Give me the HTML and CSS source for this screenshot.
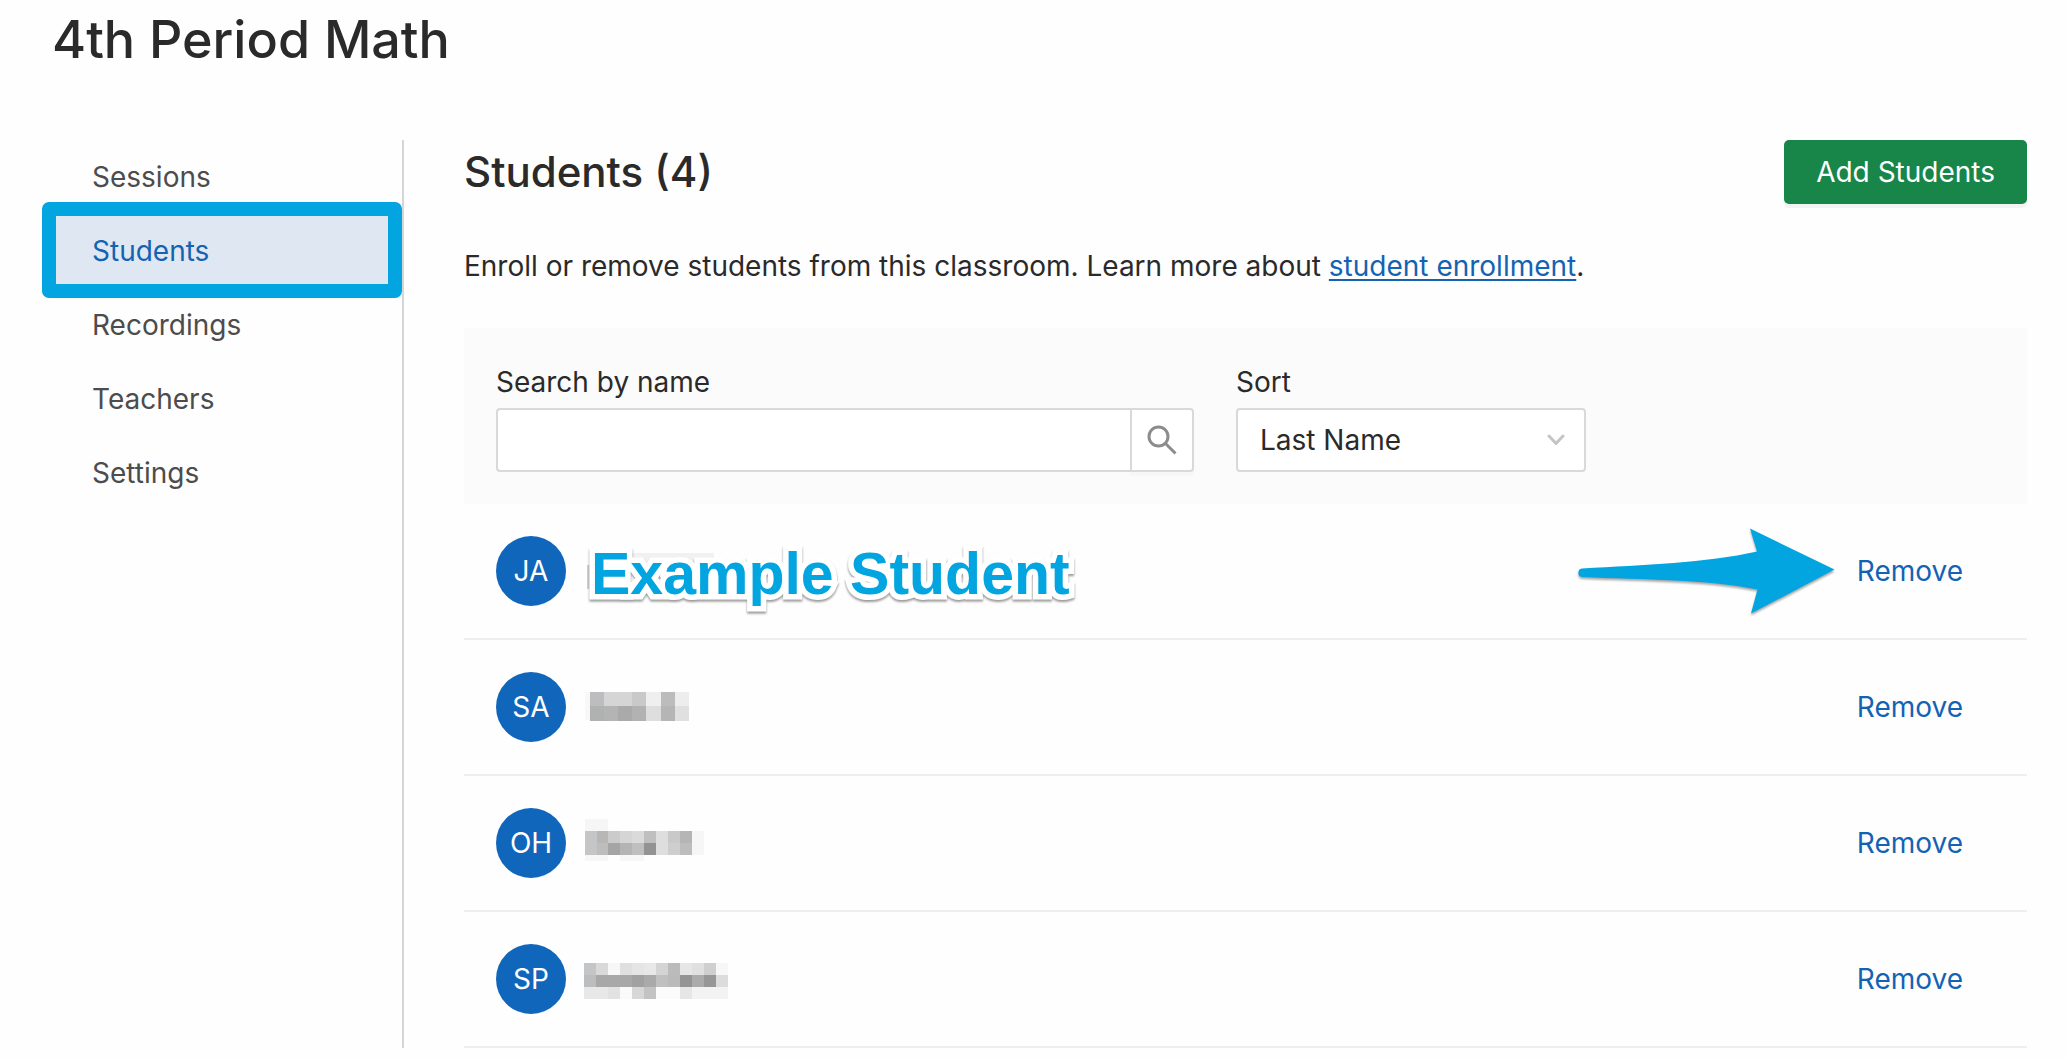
FILE: index.html
```html
<!DOCTYPE html>
<html lang="en">
<head>
  <meta charset="UTF-8" />
  <meta name="viewport" content="width=device-width, initial-scale=1.0"/>
  <title>4th Period Math - Students</title>
  <link rel="stylesheet" href="styles.css">
</head>
<body>

  <header>
    <h1>4th Period Math</h1>
  </header>

  <div class="container">
    <nav class="sidebar">
      <a href="#sessions">Sessions</a>
      <a href="#students" class="active">Students</a>
      <a href="#recordings">Recordings</a>
      <a href="#teachers">Teachers</a>
      <a href="#settings">Settings</a>
    </nav>

    <main class="content">
      <div class="content-header">
        <h2>Students (4)</h2>
        <button type="button" class="button">Add Students</button>
      </div>

      <p class="intro">Enroll or remove students from this classroom. Learn more about <a href="#enrollment">student enrollment</a>.</p>

      <form class="filters">
        <div class="field search-field">
          <label for="search">Search by name</label>
          <div class="search">
            <input type="text" id="search" />
            <button type="button" class="search-button" aria-label="Search">
              <svg width="32" height="32" viewBox="0 0 32 32" fill="none" stroke="#8c8c8c" stroke-width="3">
                <circle cx="12.5" cy="12.5" r="9.5"/>
                <path d="M19.5 19.500L29.5 29.500"/>
              </svg>
            </button>
          </div>
        </div>
        <div class="field sort-field">
          <label for="sort">Sort</label>
          <div class="select">
            <select id="sort">
              <option>Last Name</option>
              <option>First Name</option>
            </select>
            <svg class="chevron" width="20" height="14" viewBox="0 0 20 14" fill="none" stroke="#c4c4c4" stroke-width="3" stroke-linecap="round" stroke-linejoin="round">
              <path d="M3 3L10 10.500L17 3"/>
            </svg>
          </div>
        </div>
      </form>

      <ul class="students">
        <li class="student">
          <span class="avatar">JA</span>
          <svg class="name" width="156" height="48" viewBox="0 0 156 48" shape-rendering="crispEdges">
            <rect x="5" y="18" width="12" height="24" fill="#d2d2d2"/>
            <rect x="48" y="6" width="84" height="12" fill="#f1f1f1"/>
          </svg>
          <span class="callout">Example Student</span>
          <div class="action">
            <svg class="arrow" width="264" height="96" viewBox="0 0 264 96">
              <path d="M7 44.500 C70 41 130 39 182 27.500 L175 4.500 L259.500 45.500 L176 89.500 L182.500 65.500 C130 55 70 56 7 53 A4.300 4.300 0 0 1 7 44.500Z" fill="#02a5e0"/>
            </svg>
            <button type="button" class="remove">Remove</button>
          </div>
        </li>

        <li class="student">
          <span class="avatar">SA</span>
          <svg class="name" width="156" height="48" viewBox="0 0 156 48" shape-rendering="crispEdges">
            <rect x="3" y="9" width="5" height="28" fill="#f8f8f7"/>
            <rect x="8" y="9" width="14" height="14" fill="#bdbdbf"/>
            <rect x="22" y="9" width="28" height="14" fill="#d5d5d5"/>
            <rect x="50" y="9" width="14" height="14" fill="#c9c9c9"/>
            <rect x="64" y="9" width="15" height="14" fill="#efefef"/>
            <rect x="79" y="9" width="14" height="14" fill="#bcbcbc"/>
            <rect x="93" y="9" width="14" height="14" fill="#ededed"/>
            <rect x="8" y="23" width="14" height="15" fill="#b0b1b1"/>
            <rect x="22" y="23" width="14" height="15" fill="#b4b4b4"/>
            <rect x="36" y="23" width="14" height="15" fill="#aaaaaa"/>
            <rect x="50" y="23" width="14" height="15" fill="#b2b2b2"/>
            <rect x="64" y="23" width="15" height="15" fill="#dedede"/>
            <rect x="79" y="23" width="14" height="15" fill="#b5b5b5"/>
            <rect x="93" y="23" width="14" height="15" fill="#e0e0e0"/>
          </svg>
          <div class="action">
            <button type="button" class="remove">Remove</button>
          </div>
        </li>

        <li class="student">
          <span class="avatar">OH</span>
          <svg class="name" width="156" height="48" viewBox="0 0 156 48" shape-rendering="crispEdges">
            <rect x="3" y="0" width="23" height="12" fill="#f6f6f6"/>
            <rect x="3" y="12" width="12" height="12" fill="#c3c5c7"/>
            <rect x="15" y="12" width="11" height="12" fill="#b9b7b5"/>
            <rect x="26" y="12" width="12" height="12" fill="#cbcbcb"/>
            <rect x="38" y="12" width="12" height="12" fill="#d5d5d5"/>
            <rect x="50" y="12" width="12" height="12" fill="#dadada"/>
            <rect x="62" y="12" width="12" height="12" fill="#bfbfbf"/>
            <rect x="74" y="12" width="12" height="12" fill="#dedede"/>
            <rect x="86" y="12" width="12" height="12" fill="#c9c9c9"/>
            <rect x="98" y="12" width="12" height="12" fill="#b5b5b5"/>
            <rect x="110" y="12" width="12" height="24" fill="#f6f6f6"/>
            <rect x="3" y="24" width="12" height="12" fill="#c5c5c5"/>
            <rect x="15" y="24" width="11" height="12" fill="#bdbdbd"/>
            <rect x="26" y="24" width="12" height="12" fill="#a5a5a5"/>
            <rect x="38" y="24" width="12" height="12" fill="#b4b4b4"/>
            <rect x="50" y="24" width="12" height="12" fill="#bfbfbf"/>
            <rect x="62" y="24" width="12" height="12" fill="#939393"/>
            <rect x="74" y="24" width="12" height="12" fill="#dedede"/>
            <rect x="86" y="24" width="12" height="12" fill="#cecece"/>
            <rect x="98" y="24" width="12" height="12" fill="#bdbdbd"/>
            <rect x="3" y="36" width="23" height="6" fill="#f7f7f7"/>
            <rect x="38" y="36" width="24" height="6" fill="#f7f7f7"/>
          </svg>
          <div class="action">
            <button type="button" class="remove">Remove</button>
          </div>
        </li>

        <li class="student">
          <span class="avatar">SP</span>
          <svg class="name" width="156" height="48" viewBox="0 0 156 48" shape-rendering="crispEdges">
            <rect x="2" y="8" width="12" height="12" fill="#c4c5c6"/>
            <rect x="14" y="8" width="12" height="12" fill="#d9d9d9"/>
            <rect x="26" y="8" width="12" height="12" fill="#f7f7f7"/>
            <rect x="38" y="8" width="12" height="12" fill="#dfdfdf"/>
            <rect x="50" y="8" width="12" height="12" fill="#e5e5e5"/>
            <rect x="62" y="8" width="12" height="12" fill="#e8e8e8"/>
            <rect x="74" y="8" width="12" height="12" fill="#d4d4d4"/>
            <rect x="86" y="8" width="12" height="12" fill="#bbbbbb"/>
            <rect x="98" y="8" width="12" height="12" fill="#e6e6e6"/>
            <rect x="110" y="8" width="12" height="12" fill="#e0e0e0"/>
            <rect x="122" y="8" width="12" height="12" fill="#cfcfcf"/>
            <rect x="134" y="8" width="12" height="12" fill="#f7f7f7"/>
            <rect x="2" y="20" width="12" height="12" fill="#bcbdbf"/>
            <rect x="14" y="20" width="36" height="12" fill="#a8a8a8"/>
            <rect x="50" y="20" width="12" height="12" fill="#a1a1a1"/>
            <rect x="62" y="20" width="12" height="12" fill="#aaaaaa"/>
            <rect x="74" y="20" width="12" height="12" fill="#c0c0c0"/>
            <rect x="86" y="20" width="12" height="12" fill="#bababa"/>
            <rect x="98" y="20" width="12" height="12" fill="#949494"/>
            <rect x="110" y="20" width="12" height="12" fill="#ababab"/>
            <rect x="122" y="20" width="12" height="12" fill="#979797"/>
            <rect x="134" y="20" width="12" height="12" fill="#dcdcdc"/>
            <rect x="2" y="32" width="24" height="12" fill="#e8e8e8"/>
            <rect x="26" y="32" width="12" height="12" fill="#e2e2e2"/>
            <rect x="38" y="32" width="12" height="12" fill="#fafafa"/>
            <rect x="50" y="32" width="12" height="12" fill="#d7d7d7"/>
            <rect x="62" y="32" width="12" height="12" fill="#c3c3c3"/>
            <rect x="74" y="32" width="24" height="12" fill="#fbfbfb"/>
            <rect x="98" y="32" width="12" height="12" fill="#e6e6e6"/>
            <rect x="110" y="32" width="36" height="12" fill="#f3f3f3"/>
          </svg>
          <div class="action">
            <button type="button" class="remove">Remove</button>
          </div>
        </li>
      </ul>
    </main>
  </div>

</body>
</html>
```

FILE: styles.css
```css
* {
  box-sizing: border-box;
}
body {
  font-family: Inter, sans-serif;
  font-size: 28px;
  line-height: 44px;
  margin: 0;
  padding: 8px 39px 12px 52px;
  background-color: #fefefe;
  color: #2a2a2a;
}
h1, h2, p, ul {
  margin: 0;
  padding: 0;
}
h1 {
  font-size: 52px;
  font-weight: 500;
  line-height: 64px;
}
h2 {
  font-size: 42px;
  font-weight: 500;
  line-height: 64px;
}
a {
  color: #1463b3;
}
button, input, select {
  font: inherit;
}
.container {
  display: flex;
  margin-top: 68px;
  padding-left: 2px;
}

/* Sidebar */
.sidebar {
  flex: 0 0 350px;
  display: flex;
  flex-direction: column;
  border-right: 2px solid #d6d6d6;
}
.sidebar a {
  padding: 15px 38px;
  color: #4c4c4c;
  text-decoration: none;
}
.sidebar .active {
  position: relative;
  background-color: #dfe8f2;
  color: #1463b3;
}
/* highlight frame */
.sidebar .active::after {
  content: "";
  position: absolute;
  inset: -12px 0 -10px -12px;
  border: 14px solid #02a5e0;
  border-radius: 7px;
  pointer-events: none;
}

/* Main column */
.content {
  flex: 1;
  min-width: 0;
  padding-left: 60px;
}
.content-header {
  display: flex;
  justify-content: space-between;
  align-items: center;
}
.button {
  height: 64px;
  padding: 0 32px;
  background-color: #188549;
  color: white;
  border: none;
  border-radius: 5px;
  box-shadow: 0 4px 0 rgba(0,0,0,0.045);
  cursor: pointer;
}
.button:hover {
  background-color: #126b3a;
}
.intro {
  margin: 40px 0;
}
.intro a {
  text-decoration-thickness: 2px;
  text-underline-offset: 3px;
}

/* Filters */
.filters {
  display: flex;
  gap: 42px;
  padding: 32px;
  background-color: #fbfbfb;
}
.field {
  display: flex;
  flex-direction: column;
  gap: 4px;
}
.search-field {
  flex: 0 1 698px;
}
.sort-field {
  flex: 0 1 350px;
}
.search {
  display: flex;
}
.search input {
  flex: 1;
  min-width: 0;
  height: 64px;
  padding: 0 22px;
  background-color: white;
  border: 2px solid #d9d9d9;
  border-right: none;
  border-radius: 4px 0 0 4px;
}
.search-button {
  width: 64px;
  height: 64px;
  padding: 0;
  display: flex;
  align-items: center;
  justify-content: center;
  background-color: white;
  border: 2px solid #d9d9d9;
  border-radius: 0 4px 4px 0;
  box-shadow: 0 4px 0 rgba(0,0,0,0.016);
  cursor: pointer;
}
.select {
  position: relative;
}
.select select {
  appearance: none;
  width: 100%;
  height: 64px;
  padding: 0 22px;
  background-color: white;
  color: #2a2a2a;
  border: 2px solid #d9d9d9;
  border-radius: 4px;
}
.chevron {
  position: absolute;
  right: 20px;
  top: 25px;
  pointer-events: none;
}

/* Student list */
.students {
  list-style: none;
}
.student {
  position: relative;
  display: flex;
  align-items: center;
  gap: 16px;
  padding: 32px 64px 32px 32px;
  border-bottom: 2px solid #efefef;
}
.avatar {
  width: 70px;
  height: 70px;
  border-radius: 50%;
  background-color: #0f66bb;
  color: white;
  line-height: 70px;
  text-align: center;
}
.action {
  position: relative;
  margin-left: auto;
}
.remove {
  display: block;
  padding: 0;
  background: none;
  border: none;
  color: #1463b3;
  cursor: pointer;
}
.remove:hover {
  text-decoration: underline;
}

/* Annotations over the first row */
.callout {
  position: absolute;
  left: 127px;
  top: 38px;
  font-family: "Liberation Sans", Arial, sans-serif;
  font-size: 59px;
  font-weight: bold;
  line-height: 64px;
  color: #02a5e0;
  -webkit-text-stroke: 11px white;
  paint-order: stroke fill;
  filter: drop-shadow(0 2px 1px rgba(0,0,0,0.4));
  white-space: nowrap;
}
.arrow {
  position: absolute;
  right: 124px;
  top: -25px;
  filter: drop-shadow(0 2px 1px rgba(0,0,0,0.35));
}
```
